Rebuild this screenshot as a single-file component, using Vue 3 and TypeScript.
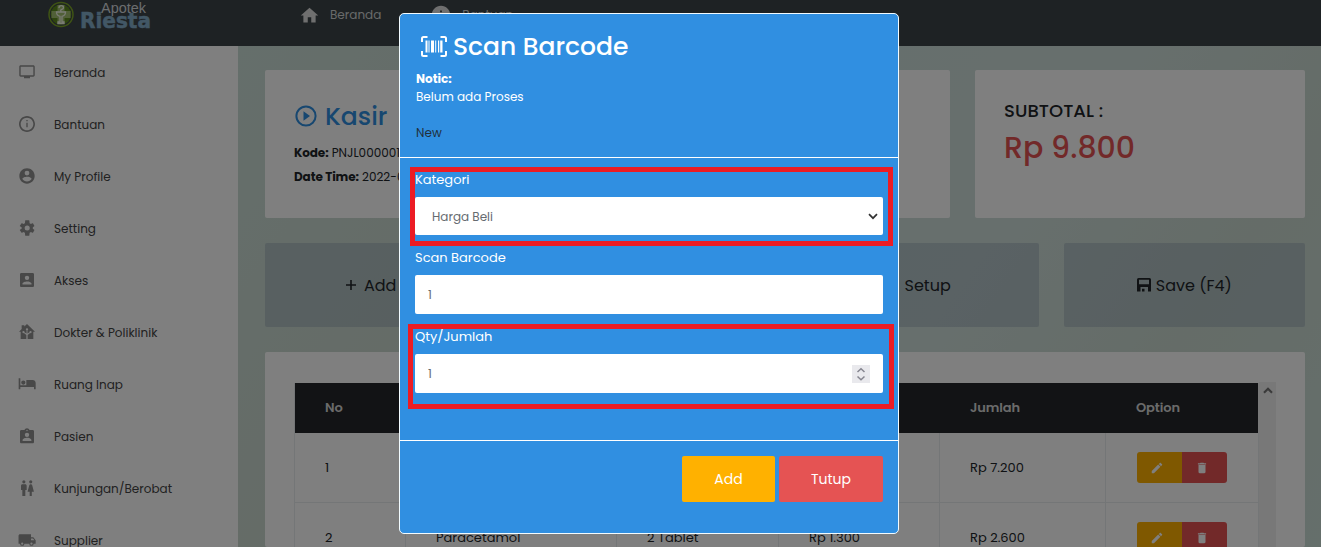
<script setup lang="ts">
import { ref } from 'vue'

interface MenuItem { label: string; icon: string }
interface Row { no: number; name: string; qty: string; price: string; total: string }

const homeIcon = 'M10 20v-6h4v6h5v-8h3L12 3 2 12h3v8z'
const infoIcon = 'M12 2C6.48 2 2 6.48 2 12s4.48 10 10 10 10-4.48 10-10S17.52 2 12 2zm1 15h-2v-6h2v6zm0-8h-2V7h2v2z'
const editIcon = 'M3 17.25V21h3.75L17.81 9.94l-3.75-3.75L3 17.25zM20.71 7.04c.39-.39.39-1.02 0-1.41l-2.34-2.34c-.39-.39-1.02-.39-1.41 0l-1.83 1.83 3.75 3.75 1.83-1.83z'
const trashIcon = 'M6 19c0 1.1.9 2 2 2h8c1.1 0 2-.9 2-2V7H6v12zM19 4h-3.5l-1-1h-5l-1 1H5v2h14V4z'

const menu: MenuItem[] = [
  { label: 'Beranda', icon: 'M21.500 2h-19C1.300 2 .4 2.900.4 4v13c0 1.100.9 2 2.100 2h5v2.500h9V19h5c1.100 0 2.100-.9 2.100-2V4c0-1.110-1-2-2.100-2zm0 15h-19V4h19v13z' },
  { label: 'Bantuan', icon: 'M11 6h2v2h-2zm0 4h2v7h-2zm1-10C5.400 0 0 5.400 0 12s5.400 12 12 12 12-5.400 12-12S18.600 0 12 0zm0 21.500c-5.200 0-9.500-4.300-9.500-9.500S6.800 2.500 12 2.500s9.500 4.300 9.500 9.500-4.300 9.500-9.500 9.500z' },
  { label: 'My Profile', icon: 'M12 .5C5.600.5.5 5.600.5 12S5.600 23.500 12 23.500 23.500 18.400 23.500 12 18.400.5 12 .5zm0 3.500a3.600 3.600 0 1 1 0 7.200A3.600 3.600 0 0 1 12 4zm0 16.200c-2.900 0-5.400-1.500-6.900-3.700.03-2.300 4.600-3.500 6.900-3.500s6.870 1.200 6.900 3.500c-1.500 2.200-4 3.700-6.900 3.700z' },
  { label: 'Setting', icon: 'M20.700 13c.04-.32.07-.65.07-1s-.03-.68-.08-1l2.200-1.700c.2-.16.25-.44.13-.66l-2.100-3.600c-.13-.23-.4-.3-.63-.23l-2.600 1.050c-.55-.42-1.130-.77-1.780-1.030L15.500.8a.52.52 0 0 0-.5-.45H9.800c-.26 0-.48.2-.5.45l-.4 4.050c-.65.26-1.240.61-1.780 1.030L4.500 4.800c-.23-.08-.5 0-.63.23l-2.600 3.600c-.13.22-.08.5.13.66L4 11c-.05.32-.1.67-.1 1s.02.68.07 1l-2.600 1.700c-.2.16-.25.44-.13.66l2.600 3.600c.13.23.4.3.63.23l2.600-1.050c.55.42 1.130.77 1.780 1.030l.4 4.050c.05.26.27.45.53.45H15c.26 0 .48-.2.5-.45l.4-4.050c.65-.26 1.240-.61 1.780-1.030l2.600 1.050c.23.08.5 0 .63-.23l2.100-3.600c.12-.22.07-.5-.13-.66L20.700 13zM12.300 15.800a3.800 3.800 0 1 1 0-7.600 3.800 3.800 0 0 1 0 7.600z' },
  { label: 'Akses', icon: 'M1.500 3.500v17c0 1.100.9 2 2 2h17c1.100 0 2-.9 2-2v-17c0-1.100-.9-2-2-2h-17c-1.100 0-2 .9-2 2zM15.300 8.800a3.300 3.300 0 1 1-6.600 0 3.300 3.300 0 0 1 6.600 0zM5.200 17.700c0-2.300 4.500-3.500 6.800-3.500s6.800 1.200 6.800 3.500v1.100H5.200v-1.100z' },
  { label: 'Dokter & Poliklinik', icon: 'M12 0 8 3.700V2H4v5.400L0 11.500h2.500V22.500h19V11.500H24zM12 6.300a1.600 1.600 0 0 1 .7 3.100v5l3-2.200a1.600 1.600 0 1 1 1 1.300L13 16.500v6h-2v-6l-3.700-3a1.600 1.600 0 1 1 1-1.300l3 2.200v-5A1.600 1.600 0 0 1 12 6.300z' },
  { label: 'Ruang Inap', icon: 'M6.500 13a3.200 3.200 0 1 0 0-6.400 3.200 3.200 0 0 0 0 6.400zM20.500 6H11v8H2V3.500H-.5V20H2v-3.500h20.500V20H25V10.500C25 8 23 6 20.500 6z' },
  { label: 'Pasien', icon: 'M20.500 3h-4.800C15.200 1.400 13.800.3 12 .3S8.800 1.400 8.300 3H3.500c-1.100 0-2 .9-2 2v16c0 1.100.9 2 2 2h17c1.100 0 2-.9 2-2V5c0-1.100-.9-2-2-2zM12 2.800a1 1 0 1 1 0 2 1 1 0 0 1 0-2zM12 7a3.300 3.300 0 1 1 0 6.600A3.300 3.300 0 0 1 12 7zm6.600 12.400H5.400v-1.200c0-2.300 4.400-3.400 6.600-3.400s6.600 1.100 6.600 3.400v1.200z' },
  { label: 'Kunjungan/Berobat', icon: 'M5 24v-9H3V8.500c0-1.200.9-2.200 2-2.200h4.500c1.100 0 2 1 2 2.200V15h-2v9zM16 24v-6.500h-3.200L15.400 8c.3-1 1.100-1.700 2.200-1.700s1.900.7 2.200 1.700l2.600 9.500h-3.200V24zM7.300 5.200a2.400 2.400 0 1 0 0-4.800 2.400 2.400 0 0 0 0 4.800zM17.600 5.200a2.400 2.400 0 1 0 0-4.800 2.400 2.400 0 0 0 0 4.800z' },
  { label: 'Supplier', icon: 'M21.500 8H18V3.500H1.500C.3 3.500-.7 4.500-.7 5.700V17.500h2.200a3.300 3.300 0 0 0 6.600 0h7.300a3.300 3.300 0 0 0 6.600 0H25V12.500zM4.800 19.200a1.700 1.700 0 1 1 0-3.400 1.700 1.700 0 0 1 0 3.400zM21 9.700l2.200 2.800H18V9.700zm-2.300 9.500a1.700 1.700 0 1 1 0-3.400 1.700 1.700 0 0 1 0 3.400z' },
]

const rows: Row[] = [
  { no: 1, name: '', qty: '', price: '', total: 'Rp 7.200' },
  { no: 2, name: 'Paracetamol', qty: '2 Tablet', price: 'Rp 1.300', total: 'Rp 2.600' },
]

const category = ref('Harga Beli')
const barcode = ref('1')
const quantity = ref('1')
</script>

<template>
  <div class="screen">
    <header class="topbar">
      <svg class="logo" width="106" height="32" viewBox="0 0 106 32">
        <circle cx="13" cy="14.500" r="12" fill="none" stroke="#7ea828" stroke-width="1.500" />
        <circle cx="13" cy="14.500" r="10.300" fill="#5d8a1c" />
        <path d="M9.500 5h7v6h6v7h-6v6h-7v-6h-6v-7h6z" fill="#a3c070" />
        <path d="M8.500 12h9c0 3-2 4-3.500 4.300V22h2v1.500h-6V22h2v-5.700C10.500 16 8.500 15 8.500 12zM11 8c0-3 4.500-3 4.500-.5S11.500 9 13 11.500" fill="none" stroke="#f4f7e8" stroke-width="1.300" />
        <text class="logo-top" x="53" y="13" textLength="45" lengthAdjust="spacingAndGlyphs">Apotek</text>
        <text class="logo-main" x="32" y="28" textLength="71" lengthAdjust="spacingAndGlyphs">Riesta</text>
      </svg>
      <nav class="nav">
        <span class="nav-item"><svg width="21" height="21" viewBox="0 0 24 24"><path :d="homeIcon" /></svg>Beranda</span>
        <span class="nav-item"><svg width="22" height="22" viewBox="0 0 24 24"><path :d="infoIcon" /></svg>Bantuan</span>
      </nav>
    </header>

    <div class="body">
      <aside class="sidebar">
        <div v-for="m in menu" :key="m.label" class="menu-item">
          <svg width="16" height="16" viewBox="0 0 24 24"><path :d="m.icon" fill-rule="evenodd" /></svg>
          <span>{{ m.label }}</span>
        </div>
      </aside>

      <main class="content">
        <div class="summary">
          <section class="card kasir">
            <h1>
              <svg width="24" height="24" viewBox="0 0 24 24"><circle cx="12" cy="12" r="9.600" fill="none" stroke="currentColor" stroke-width="2" /><path d="M9.500 7.300v9.400l6.500-4.700z" fill="currentColor" /></svg>
              <span>Kasir</span>
            </h1>
            <p><b>Kode:</b> PNJL0000012</p>
            <p><b>Date Time:</b> 2022-0</p>
          </section>
          <section class="card subtotal">
            <h2>SUBTOTAL :</h2>
            <strong>Rp 9.800</strong>
          </section>
        </div>

        <div class="actions">
          <div class="action add">
            <svg width="12" height="12" viewBox="0 0 12 12"><path d="M6 1v10M1 6h10" stroke="currentColor" stroke-width="1.600" /></svg>
            <span>Add</span>
          </div>
          <div class="action" />
          <div class="action setup"><span>Setup</span></div>
          <div class="action save">
            <svg width="14" height="14" viewBox="0 0 14 14"><path d="M1.500 0h11A1.500 1.500 0 0 1 14 1.500v12h-3V9H3.500v4.500H0v-12A1.500 1.500 0 0 1 1.500 0zM2 1.800v4.400h10V1.800zM5 10.800h2.500v2.700H5z" fill-rule="evenodd" fill="currentColor" /></svg>
            <span>Save (F4)</span>
          </div>
        </div>

        <section class="card listing">
          <div class="scroller">
            <table>
              <colgroup><col class="c1" /><col class="c2" /><col class="c3" /><col class="c4" /><col class="c5" /><col class="c6" /></colgroup>
              <thead>
                <tr><th>No</th><th /><th /><th /><th>Jumlah</th><th>Option</th></tr>
              </thead>
              <tbody>
                <tr v-for="r in rows" :key="r.no">
                  <td>{{ r.no }}</td>
                  <td>{{ r.name }}</td>
                  <td>{{ r.qty }}</td>
                  <td>{{ r.price }}</td>
                  <td>{{ r.total }}</td>
                  <td>
                    <div class="options">
                      <span class="edit"><svg width="14" height="14" viewBox="0 0 24 24"><path :d="editIcon" /></svg></span>
                      <span class="del"><svg width="14" height="14" viewBox="0 0 24 24"><path :d="trashIcon" /></svg></span>
                    </div>
                  </td>
                </tr>
              </tbody>
            </table>
            <div class="track"><svg width="10" height="7" viewBox="0 0 10 7"><path d="M1 5.800 5 1.800l4 4" fill="none" stroke="#777" stroke-width="2.200" /></svg></div>
          </div>
        </section>
      </main>
    </div>

    <div class="backdrop" />

    <div class="modal" role="dialog">
      <div class="modal-head">
        <h3>
          <svg width="26" height="21" viewBox="0 0 26 21">
            <path d="M1 6V2.500Q1 1 2.500 1H6.500M19.500 1h4Q25 1 25 2.500V6M25 15v3.500q0 1.500-1.500 1.500h-4M6.500 20h-4Q1 20 1 18.500V15" fill="none" stroke="#fff" stroke-width="2" />
            <path d="M4.500 4.500h2v12h-2zM7.500 4.500h1v12h-1zM10 4.500h3v12h-3zM14.200 4.500h1v12h-1zM17 4.500h1.200v12H17zM19.200 4.500h2.300v12h-2.300z" fill="#fff" />
          </svg>
          <span>Scan Barcode</span>
        </h3>
        <b>Notic:</b>
        <p>Belum ada Proses</p>
        <p class="new">New</p>
      </div>

      <div class="modal-body">
        <div class="field">
          <label>Kategori</label>
          <div class="input select">
            <span>{{ category }}</span>
            <svg width="10" height="7" viewBox="0 0 10 7"><path d="M1 1.200 5 5.200l4-4" fill="none" stroke="#333" stroke-width="1.700" /></svg>
          </div>
          <i class="mark mark-category" />
        </div>
        <div class="field">
          <label>Scan Barcode</label>
          <div class="input tall">{{ barcode }}</div>
        </div>
        <div class="field">
          <label>Qty/Jumlah</label>
          <div class="input tall number">
            <span>{{ quantity }}</span>
            <span class="spin"><svg width="18" height="18" viewBox="0 0 18 18"><path d="M5.500 7 9 3.800 12.500 7M5.500 11.500 9 14.700l3.500-3.200" fill="none" stroke="#85858f" stroke-width="1.500" /></svg></span>
          </div>
          <i class="mark mark-quantity" />
        </div>
      </div>

      <div class="modal-foot">
        <button class="btn-add" type="button">Add</button>
        <button class="btn-close" type="button">Tutup</button>
      </div>
    </div>
  </div>
</template>

<style>
html, body { margin: 0; overflow: hidden; }
</style>

<style scoped>
* { box-sizing: border-box; }
.screen { position: relative; width: 1321px; height: 547px; overflow: hidden; font-family: Poppins, Inter, "Liberation Sans", sans-serif; font-size: 13px; color: #212529; display: flex; flex-direction: column; }
h1, h2, h3, p { margin: 0; font-weight: 500; }

.topbar { height: 46px; flex: none; background: #3c4448; display: flex; padding-left: 48px; align-items: flex-start; }
.logo { flex: none; overflow: visible; }
.logo-top { font-family: "Liberation Sans", sans-serif; font-size: 15px; fill: #d6dade; }
.logo-main { font-family: "DejaVu Sans", sans-serif; font-weight: 700; font-size: 21.5px; fill: #84aecb; stroke: #84aecb; stroke-width: .5px; }
.nav { display: flex; margin-left: 145px; height: 30px; color: #d2d4d5; gap: 49px; font-size: 12px; }
.nav-item { display: flex; align-items: center; gap: 10px; }
.nav-item svg { fill: #dedede; }

.body { flex: 1; display: flex; min-height: 0; }
.sidebar { width: 238px; flex: none; background: #fff; }
.menu-item { height: 52px; display: flex; align-items: center; padding: 2px 0 0 19px; gap: 19px; color: #444; font-size: 12px; }
.menu-item svg { fill: #909090; overflow: visible; position: relative; top: -1px; }

.content { flex: 1; min-width: 0; padding: 24px 16px 0 27px; background: linear-gradient(125deg, #cbded7 0%, #cad8cf 25%, #cddfdb 45%, #cfdfdb 62%, #cad9d0 80%, #cbded7 100%); display: flex; flex-direction: column; gap: 25px; }
.card { background: #fff; border-radius: 2px; }
.summary { display: flex; gap: 25px; height: 148px; flex: none; }
.kasir { width: 685px; padding: 30px 0 0 29px; font-size: 12px; }
.kasir h1 { display: flex; align-items: center; height: 34px; gap: 7px; color: #2f8ee0; font-size: 25px; margin-bottom: 7px; }
.kasir h1 svg { position: relative; top: -1px; }
.kasir p { line-height: 24px; font-weight: 400; }
.kasir b { font-weight: 700; letter-spacing: -.1px; }
.subtotal { width: 330px; padding: 30px 0 0 29px; }
.subtotal h2 { font-size: 18px; line-height: 22px; letter-spacing: .05px; }
.subtotal strong { display: block; margin-top: 8px; color: #e55353; font-weight: 500; font-size: 30px; line-height: 36px; }

.actions { height: 84px; flex: none; display: grid; grid-template-columns: repeat(4, 1fr); gap: 25px; }
.action { background: rgba(130, 145, 165, .35); border-radius: 2px; font-size: 16px; display: flex; align-items: center; gap: 5px; }
.add { padding-left: 80px; gap: 7px; }
.setup { padding-left: 107px; }
.save { justify-content: center; gap: 5px; }

.listing { flex: 1; padding: 30px 29px 0; min-height: 0; overflow: hidden; }
.scroller { display: flex; }
table { table-layout: fixed; width: 965px; margin-top: 1px; flex: none; border-collapse: separate; border-spacing: 0; }
.c1 { width: 111px; } .c2 { width: 211px; } .c3 { width: 162px; } .c4 { width: 161px; } .c5 { width: 166px; } .c6 { width: 154px; }
th { height: 50px; background: #24272b; color: #d6d6d6; font-weight: 600; text-align: left; padding: 0 30px 0 31px; letter-spacing: -.1px; }
th:first-child { border-left: 1px solid #e9ecef; padding-left: 30px; }
th:last-child { border-right: 1px solid #f1f1f1; }
td { height: 70px; padding: 0 30px; border: solid #e9ecef; border-width: 0 0 1px 1px; white-space: nowrap; }
td:last-child { padding-right: 0; border-right-width: 1px; }
.options { display: flex; width: 90px; height: 31px; margin-left: 1px; border-radius: 3px; overflow: hidden; }
.options span { flex: 1; display: flex; align-items: center; justify-content: center; padding-right: 5px; }
.options svg { fill: #fff; }
.edit { background: #ffb100; }
.del { background: #e55353; }
.track { width: 17px; background: #f1f1f1; display: flex; justify-content: center; padding-top: 5px; }

.backdrop { position: absolute; inset: 0; background: rgba(0, 0, 0, .5); }

.modal { position: absolute; left: 399px; top: 13px; width: 500px; height: 521px; background: #308fe1; border: 1px solid #f2fbff; border-radius: 5px; color: #fff; display: flex; flex-direction: column; }
.modal-head { height: 144px; border-bottom: 1px solid #fff; padding: 16px 16px 0; font-size: 12px; line-height: 18px; }
.modal-head h3 { display: flex; align-items: center; gap: 6px; height: 34px; padding-left: 5px; font-size: 25px; margin-bottom: 6px; }
.modal-head h3 svg { position: relative; top: -1px; }
.modal-head b { display: block; }
.modal-head p { font-weight: 400; }
.modal-head .new { margin-top: 18px; color: #212f3d; }
.modal-body { height: 283px; border-bottom: 1px solid #fff; padding: 12px 15px 0; }
.field { position: relative; }
label { display: block; height: 27px; line-height: 19px; font-weight: 400; }
.input { height: 38px; border-radius: 2px; background: #fff; color: #666b70; font-size: 12px; display: flex; align-items: center; justify-content: space-between; padding: 0 13px; margin-bottom: 13px; }
.input.tall { height: 39px; }
.input.select { padding: 1px 5px 0 17px; }
.spin { width: 18px; height: 18px; background: #e9e9ed; }
.mark { position: absolute; border: 5px solid #ec1c24; }
.mark-category { left: -5px; top: -3px; width: 483px; height: 79px; }
.mark-quantity { left: -7px; top: -3px; width: 486px; height: 85px; }
.modal-foot { display: flex; justify-content: flex-end; gap: 4px; padding: 15px 15px 0; }
button { height: 46px; border: 0; border-radius: 2px; color: #fff; font: 400 14px Poppins, Inter, sans-serif; padding: 0; }
.btn-add { width: 93px; background: #ffb100; }
.btn-close { width: 104px; background: #e55353; }
</style>
